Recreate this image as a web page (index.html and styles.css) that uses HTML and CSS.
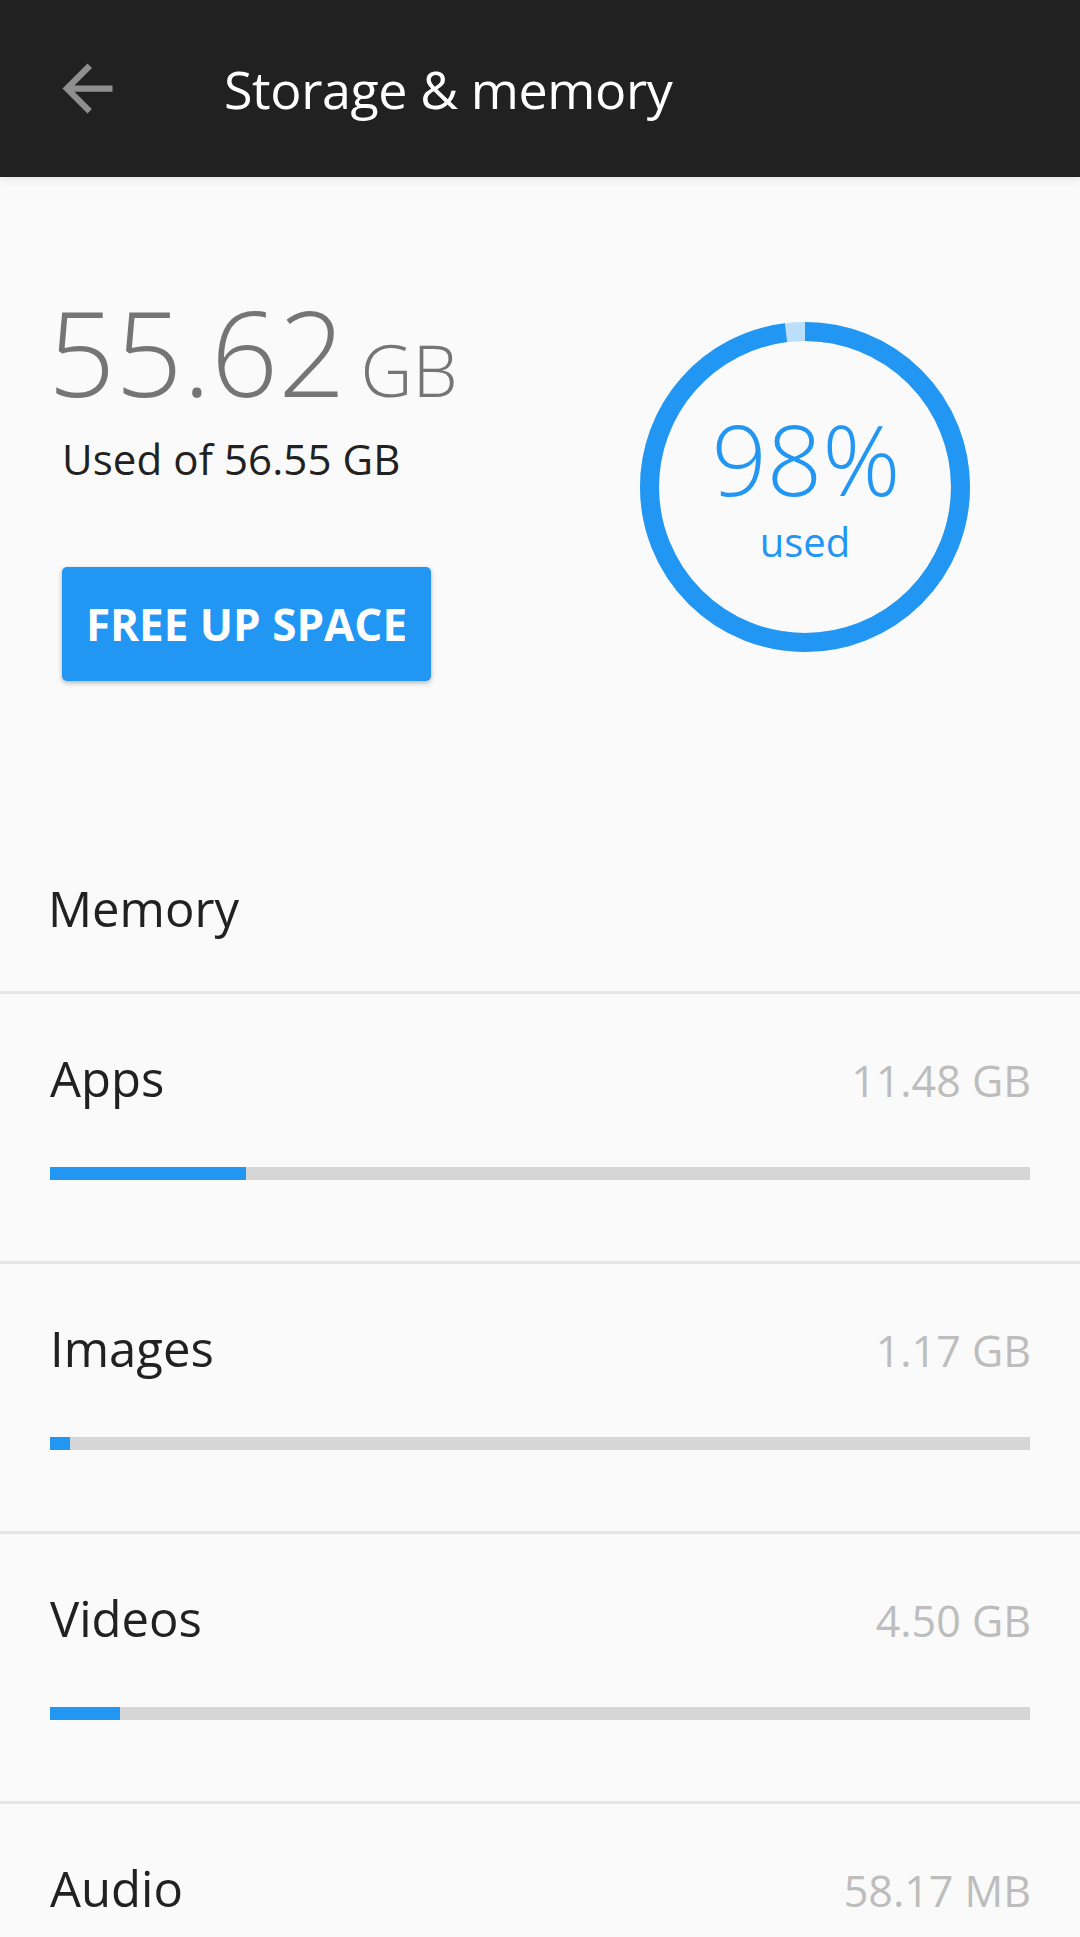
FILE: index.html
```html
<!DOCTYPE html>
<html lang="en">
<head>
<meta charset="utf-8">
<title>Storage &amp; memory</title>
<link rel="stylesheet" href="styles.css">
</head>
<body>
<header class="appbar">
  <svg class="back" viewBox="0 0 24 24" aria-hidden="true"><path d="M20 11H7.83l5.59-5.59L12 4l-8 8 8 8 1.41-1.41L7.83 13H20v-2z"/></svg>
  <h1 class="title">Storage &amp; memory</h1>
</header>
<main>
  <section class="summary">
    <div class="summary-info">
      <div class="used-big"><span class="num">55.62</span><span class="unit">GB</span></div>
      <div class="used-of">Used of 56.55 GB</div>
      <button class="free-btn">FREE UP SPACE</button>
    </div>
    <div class="ring">
      <svg class="ring-svg" viewBox="0 0 330 330" aria-hidden="true">
        <circle class="ring-track" cx="165" cy="165" r="155.5"/>
        <circle class="ring-fill" cx="165" cy="165" r="155.5"/>
      </svg>
      <div class="ring-pct">98%</div>
      <div class="ring-label">used</div>
    </div>
  </section>
  <div class="row-head">Memory</div>
  <div class="row">
    <div class="row-top"><span class="label">Apps</span><span class="value">11.48 GB</span></div>
    <div class="bar"><div class="fill" style="width:20%"></div></div>
  </div>
  <div class="row">
    <div class="row-top"><span class="label">Images</span><span class="value">1.17 GB</span></div>
    <div class="bar"><div class="fill" style="width:2%"></div></div>
  </div>
  <div class="row">
    <div class="row-top"><span class="label">Videos</span><span class="value">4.50 GB</span></div>
    <div class="bar"><div class="fill" style="width:7.1%"></div></div>
  </div>
  <div class="row">
    <div class="row-top"><span class="label">Audio</span><span class="value">58.17 MB</span></div>
    <div class="bar"><div class="fill" style="width:0.3%"></div></div>
  </div>
</main>
</body>
</html>
```
FILE: styles.css
```css
* { box-sizing: border-box; }
html, body { margin: 0; padding: 0; }
body {
  background: #fafafa;
  font-family: "Open Sans", "Noto Sans", sans-serif;
  color: #212121;
  overflow: hidden;
}
.appbar {
  height: 177px;
  background: #212121;
  display: flex;
  align-items: center;
  padding-left: 50px;
  box-shadow: 0 2px 8px rgba(0,0,0,0.10);
  position: relative;
  z-index: 1;
}
.back {
  width: 75px;
  height: 75px;
  fill: #8f8f8f;
  flex: none;
}
.title {
  margin: 0 0 0 99px;
  font-size: 52px;
  font-weight: 400;
  letter-spacing: -0.4px;
  color: #ffffff;
  line-height: 177px;
}
.summary {
  display: flex;
  justify-content: space-between;
  align-items: flex-start;
  padding: 110px 110px 0 48px;
}
.summary-info {
  display: flex;
  flex-direction: column;
  align-items: flex-start;
}
.used-big {
  display: flex;
  align-items: baseline;
  color: #757575;
}
.used-big .num {
  font-size: 118px;
  font-weight: 300;
  line-height: 130px;
}
.used-big .unit {
  font-size: 72px;
  font-weight: 300;
  line-height: 72px;
  margin-left: 15px;
}
.used-of {
  margin: 17px 0 0 14px;
  font-size: 42px;
  line-height: 50px;
  letter-spacing: 0.1px;
  color: #212121;
}
.free-btn {
  margin: 83px 0 0 14px;
  width: 369px;
  height: 114px;
  border: 0;
  border-radius: 5px;
  background: #2196f3;
  color: #ffffff;
  font-family: "Open Sans", "Noto Sans", sans-serif;
  font-size: 44px;
  font-weight: 700;
  letter-spacing: 0;
  box-shadow: 0 2px 5px rgba(0,0,0,0.28);
  padding: 0;
}
.ring {
  position: relative;
  width: 330px;
  height: 330px;
  margin-top: 35px;
  display: flex;
  flex-direction: column;
  align-items: center;
  justify-content: center;
  color: #2196f3;
}
.ring-svg {
  position: absolute;
  inset: 0;
  width: 330px;
  height: 330px;
}
.ring-track {
  fill: none;
  stroke: #bbdefb;
  stroke-width: 19;
}
.ring-fill {
  fill: none;
  stroke: #2196f3;
  stroke-width: 19;
  stroke-dasharray: 957.5 977;
  transform: rotate(-90deg);
  transform-origin: 165px 165px;
}
.ring-pct {
  position: relative;
  font-size: 97px;
  font-weight: 300;
  line-height: 100px;
  margin-left: 2px;
}
.ring-label {
  position: relative;
  font-size: 40px;
  line-height: 50px;
  margin-top: 9px;
}
.row-head {
  padding: 197px 48px 53px;
  font-size: 49px;
  line-height: 60px;
  border-bottom: 3px solid #e6e6e6;
}
.row {
  padding: 54px 50px 81px;
  border-bottom: 3px solid #e6e6e6;
}
.row-top {
  display: flex;
  justify-content: space-between;
  align-items: baseline;
}
.label {
  font-size: 49px;
  line-height: 60px;
  color: #212121;
}
.value {
  font-size: 43px;
  line-height: 50px;
  color: #bdbdbd;
  margin-right: -1px;
}
.bar {
  margin-top: 59px;
  height: 13px;
  background: #d6d6d6;
}
.fill {
  height: 100%;
  background: #2196f3;
}
```
